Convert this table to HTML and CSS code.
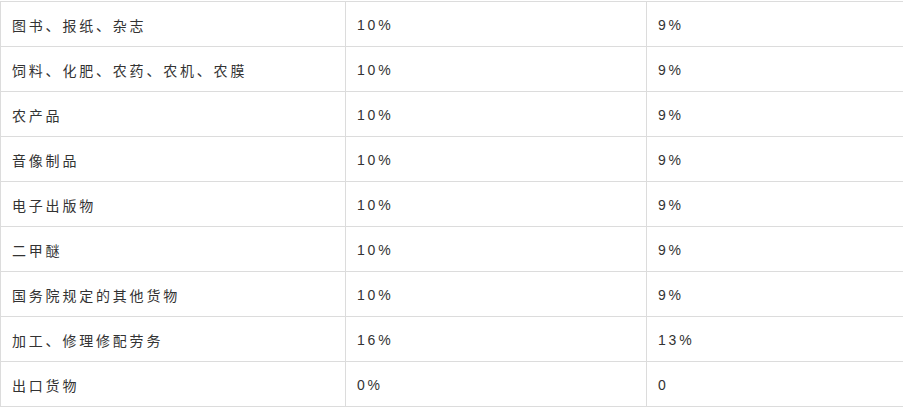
FILE: index.html
```html
<!DOCTYPE html>
<html lang="zh">
<head>
<meta charset="utf-8">
<link rel="stylesheet" href="styles.css">
</head>
<body>
<table class="rates">
  <colgroup>
    <col class="c1"><col class="c2"><col class="c3">
  </colgroup>
  <tbody>
    <tr><td>图书、报纸、杂志</td><td>10%</td><td>9%</td></tr>
    <tr><td>饲料、化肥、农药、农机、农膜</td><td>10%</td><td>9%</td></tr>
    <tr><td>农产品</td><td>10%</td><td>9%</td></tr>
    <tr><td>音像制品</td><td>10%</td><td>9%</td></tr>
    <tr><td>电子出版物</td><td>10%</td><td>9%</td></tr>
    <tr><td>二甲醚</td><td>10%</td><td>9%</td></tr>
    <tr><td>国务院规定的其他货物</td><td>10%</td><td>9%</td></tr>
    <tr><td>加工、修理修配劳务</td><td>16%</td><td>13%</td></tr>
    <tr><td>出口货物</td><td>0%</td><td>0</td></tr>
  </tbody>
</table>
</body>
</html>
```
FILE: styles.css
```css
html, body {
  margin: 0;
  padding: 0;
  background: #fff;
}
body {
  padding-top: 1px;
}
.rates {
  border-collapse: collapse;
  table-layout: fixed;
  width: 903px;
  font-family: "Liberation Sans", "Noto Sans CJK SC", sans-serif;
  font-size: 14px;
  color: #333;
  letter-spacing: 2.8px;
}
.c1 { width: 345px; }
.c2 { width: 301px; }
.c3 { width: 257px; }
.rates td {
  border: 1px solid #dcdcdc;
  height: 44px;
  padding: 1px 11px 0;
  box-sizing: border-box;
  vertical-align: middle;
  white-space: nowrap;
}
.rates tr {
  height: 45px;
}
```
